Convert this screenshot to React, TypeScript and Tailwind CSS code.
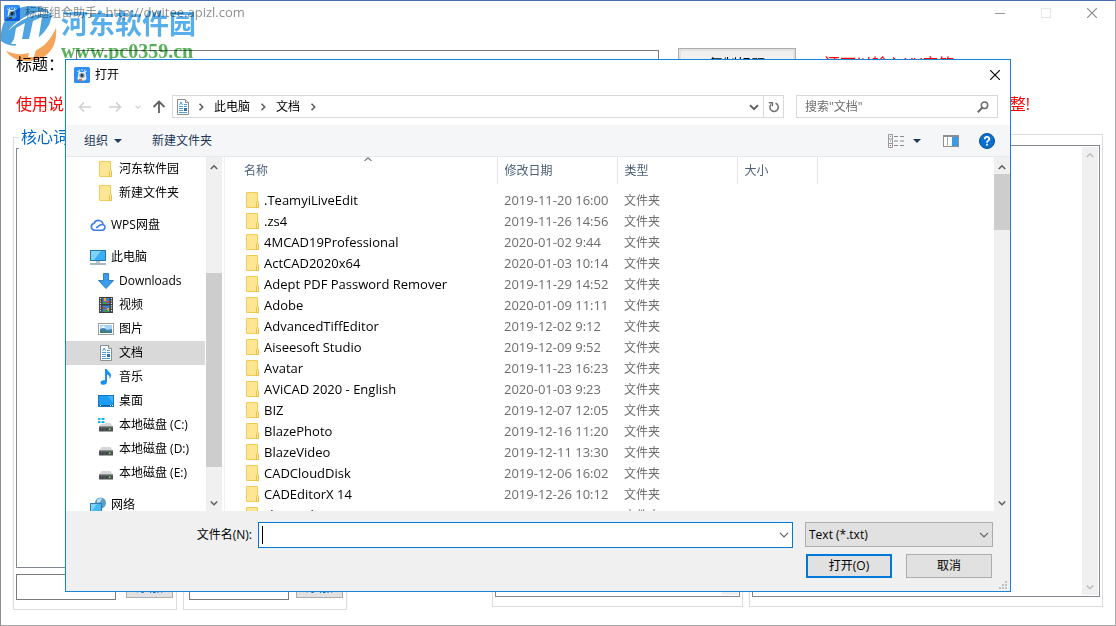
import React from "react";

const FONT = "font-['Open_Sans','Noto_Sans_CJK_SC',sans-serif]";

type IconProps = { className?: string };

function AppIcon({ className = "size-4" }: IconProps) {
  return (
    <svg className={className} viewBox="0 0 16 16" aria-hidden="true">
      <rect width="16" height="16" rx="1.5" fill="#2f8df5" />
      <path d="M3 4l3 1M13 4l-3 1M5 2.5l1 2M11 2.5l-1 2M8 2v2" stroke="#cfe6ff" strokeWidth="1" />
      <path d="M4.5 5h7l1 7-2 1.500h-5l-2-1.500z" fill="#e9f1f8" />
      <circle cx="8" cy="8.500" r="2.700" fill="#8fa3b5" />
      <circle cx="8" cy="8.500" r="1.400" fill="#2b3440" />
      <path d="M5 12h3v2H5z" fill="#e2683c" />
    </svg>
  );
}

function FolderIcon() {
  return (
    <svg className="h-4 w-3.5 shrink-0" viewBox="0 0 14 16" aria-hidden="true">
      <path d="M.5.5h11v9l1 1v5H.5z" fill="#ffe694" stroke="#f0cc57" />
      <path d="M10.500 15.500v-5l1-1.500 1 1.500v5z" fill="#ffefb5" stroke="#e8bf3c" />
    </svg>
  );
}

function DocIcon() {
  return (
    <svg className="h-4 w-4 shrink-0" viewBox="0 0 16 16" aria-hidden="true">
      <path d="M2.500.5h8l3 3v12h-11z" fill="#fff" stroke="#8b8f94" />
      <path d="M10.500.5v3h3" fill="#e8eaec" stroke="#8b8f94" />
      <path d="M4.500 6l1.500-3L7.500 6M4 7.500h4M9 5.500h3M9 7.500h3M4 9.500h4M4 11.500h4M4 13.500h8" stroke="#4a9fdc" fill="none" />
      <path d="M9 9h3v3H9z" fill="#2f6fae" />
    </svg>
  );
}

function CloudIcon() {
  return (
    <svg className="size-4 shrink-0" viewBox="0 0 16 16" aria-hidden="true" fill="none" stroke="#3d7bf0" strokeWidth="1.600">
      <path d="M4 13.200h8.200a3 3 0 0 0 .8-5.800A4.600 4.600 0 0 0 4.200 6.200 3.600 3.600 0 0 0 4 13.200zM6 10.500c1.500 0 2-.8 2.800-1.600.8-.8 2-1.300 3.700-1.100" />
    </svg>
  );
}

function PcIcon() {
  return (
    <svg className="size-4 shrink-0" viewBox="0 0 16 16" aria-hidden="true">
      <rect x=".5" y="1.500" width="15" height="10" fill="#3aaef2" stroke="#2478ac" />
      <path d="M1 2h10L4 11H1z" fill="#7fd2fb" />
      <path d="M6 12h4v2H6z" fill="#b9c6cf" />
      <path d="M0 15h16" stroke="#8ba1ae" strokeWidth="1.500" />
    </svg>
  );
}

function DownloadIcon() {
  return (
    <svg className="size-4 shrink-0" viewBox="0 0 16 16" aria-hidden="true">
      <path d="M5.500.5h5v7h5L8 15.500.5 7.500h5z" fill="#3a9bea" stroke="#2a80c8" />
    </svg>
  );
}

function VideoIcon() {
  return (
    <svg className="size-4 shrink-0" viewBox="0 0 16 16" aria-hidden="true">
      <rect x="1" y="0" width="14" height="16" fill="#3f3f3f" />
      <path d="M2.500 1v14M13.500 1v14" stroke="#e8e8e8" strokeWidth="1.200" strokeDasharray="1.200 1.200" />
      <rect x="4.500" y="1" width="7" height="6" fill="#3f7fd0" />
      <rect x="4.500" y="8.500" width="7" height="6.500" fill="#3f7fd0" />
      <path d="M6 1h2v3H6zM9 11h2v3H9z" fill="#e0b02c" />
      <path d="M8 4h3v2H8zM5 10h2v2H5z" fill="#cf4630" />
      <path d="M5 5h3v2H5zM6 13h4v2H6z" fill="#3f9a45" />
    </svg>
  );
}

function PictureIcon() {
  return (
    <svg className="size-4 shrink-0" viewBox="0 0 16 16" aria-hidden="true">
      <rect x=".5" y="2.500" width="15" height="11" fill="#fff" stroke="#9aa0a6" />
      <rect x="2" y="4" width="12" height="8" fill="#9fd4f7" />
      <path d="M2 8l4-1 3 2 5-1v4H2z" fill="#3f7fae" />
      <path d="M2 6l3-1 3 1.500L5 7z" fill="#fff" />
      <path d="M2 10l5 0 7 2H2z" fill="#3d7f6b" />
    </svg>
  );
}

function MusicIcon() {
  return (
    <svg className="size-4 shrink-0" viewBox="0 0 16 16" aria-hidden="true">
      <path d="M7 0h2c.3 2.500 4 3 4 6.500 0 1.500-.7 2.500-1.500 3.500.6-3-.9-4-2.500-4.500V13c0 1.500-1.500 2.800-3.500 2.800S2.500 15 2.500 13.500 4 11 7 11z" fill="#1b93ee" />
    </svg>
  );
}

function DesktopIcon() {
  return (
    <svg className="size-4 shrink-0" viewBox="0 0 16 16" aria-hidden="true">
      <rect x=".5" y="2.500" width="15" height="11" fill="#1e9bf5" stroke="#1477c2" />
      <path d="M10 3h5v7z" fill="#49b2fa" />
      <path d="M1 12.500h14" stroke="#0f5f9f" />
      <path d="M2 12.500h1M12 12.500h3" stroke="#fff" strokeDasharray="1 1" />
    </svg>
  );
}

function DriveIcon({ system }: { system?: boolean }) {
  return (
    <svg className="size-4 shrink-0" viewBox="0 0 16 16" aria-hidden="true">
      <path d="M3.500 6h9l2.500 4H1z" fill="#d4d6d8" />
      <rect x="1" y="9.500" width="14" height="5" rx=".6" fill="#4b4e50" />
      <path d="M1 9.800h14" stroke="#8f9294" />
      <rect x="11" y="11.500" width="1.500" height="1.500" fill="#7dea5e" />
      {system && (
        <>
          <path d="M0 0h7v7H0z" fill="#fff" />
          <path d="M0 1h2.500v2H0zM3.500 1h3v2h-3zM0 4h2.500v2H0zM3.500 4h3v2h-3z" fill="#17b3ec" />
        </>
      )}
    </svg>
  );
}

function NetworkIcon() {
  return (
    <svg className="size-4 shrink-0" viewBox="0 0 16 16" aria-hidden="true">
      <circle cx="10.500" cy="6" r="5.500" fill="#5b9dc4" />
      <path d="M7 3c2-2 4-2 5-1l-2 3-3 1z" fill="#c3e0ee" />
      <rect x=".5" y="6.500" width="11" height="8" fill="#49b6f7" stroke="#2a7cb5" />
      <path d="M1 7h6l-5 7H1z" fill="#82d0fb" />
    </svg>
  );
}

function Chevron({ dir, color = "#606060", className = "size-2" }: { dir: "up" | "down" | "right"; color?: string; className?: string }) {
  const paths = { up: "M.8 6L4 2.800 7.200 6", down: "M.8 2.500L4 5.700 7.200 2.500", right: "M2.500.8L5.700 4 2.500 7.200" };
  return (
    <svg className={className} viewBox="0 0 8 8" fill="none" stroke={color} strokeWidth="1.600" aria-hidden="true">
      <path d={paths[dir]} />
    </svg>
  );
}

function Triangle() {
  return (
    <svg className="h-1 w-2" viewBox="0 0 8 4" aria-hidden="true">
      <path d="M0 0h8L4 4z" fill="#1e395b" />
    </svg>
  );
}

function CloseIcon({ color, className = "size-2.5" }: { color: string; className?: string }) {
  return (
    <svg className={className} viewBox="0 0 10 10" stroke={color} strokeWidth="1.100" aria-hidden="true">
      <path d="M0 0l10 10M10 0L0 10" />
    </svg>
  );
}

type NavItem = { label: string; icon: React.ReactNode; nested?: boolean; selected?: boolean };

const navGroups: NavItem[][] = [
  [
    { label: "河东软件园", icon: <FolderIcon />, nested: true },
    { label: "新建文件夹", icon: <FolderIcon />, nested: true },
  ],
  [{ label: "WPS网盘", icon: <CloudIcon /> }],
  [
    { label: "此电脑", icon: <PcIcon /> },
    { label: "Downloads", icon: <DownloadIcon />, nested: true },
    { label: "视频", icon: <VideoIcon />, nested: true },
    { label: "图片", icon: <PictureIcon />, nested: true },
    { label: "文档", icon: <DocIcon />, nested: true, selected: true },
    { label: "音乐", icon: <MusicIcon />, nested: true },
    { label: "桌面", icon: <DesktopIcon />, nested: true },
    { label: "本地磁盘 (C:)", icon: <DriveIcon system />, nested: true },
    { label: "本地磁盘 (D:)", icon: <DriveIcon />, nested: true },
    { label: "本地磁盘 (E:)", icon: <DriveIcon />, nested: true },
  ],
  [{ label: "网络", icon: <NetworkIcon /> }],
];

const files: [string, string][] = [
  [".TeamyiLiveEdit", "2019-11-20 16:00"],
  [".zs4", "2019-11-26 14:56"],
  ["4MCAD19Professional", "2020-01-02 9:44"],
  ["ActCAD2020x64", "2020-01-03 10:14"],
  ["Adept PDF Password Remover", "2019-11-29 14:52"],
  ["Adobe", "2020-01-09 11:11"],
  ["AdvancedTiffEditor", "2019-12-02 9:12"],
  ["Aiseesoft Studio", "2019-12-09 9:52"],
  ["Avatar", "2019-11-23 16:23"],
  ["AViCAD 2020 - English", "2020-01-03 9:23"],
  ["BIZ", "2019-12-07 12:05"],
  ["BlazePhoto", "2019-12-16 11:20"],
  ["BlazeVideo", "2019-12-11 13:30"],
  ["CADCloudDisk", "2019-12-06 16:02"],
  ["CADEditorX 14", "2019-12-26 10:12"],
  ["cherryplayer", ""],
];

function WordGroup({ title, name }: { title?: string; name: string }) {
  return (
    <section className={`relative flex w-[164px] flex-col border border-[#dcdcdc] pb-[9px] pt-2.5 ${title ? "pl-0.5 pr-[3px]" : "pl-[5px] pr-[3px]"}`}>
      {title && <h2 className="absolute -top-[13px] left-[5px] bg-white px-0.5 text-base leading-6 text-[#0066cc]">{title}</h2>}
      <div className="flex-1 border border-[#828790]" />
      <div className="mt-1.5 flex items-start justify-between">
        <input aria-label={name} className="h-[26px] w-[100px] border border-[#7a7a7a] bg-white px-1" />
        <button className="h-6 w-[47px] border border-[#adadad] bg-[#e1e1e1] text-sm leading-5 text-[#0078d7]">添加</button>
      </div>
    </section>
  );
}

function MainWindow() {
  return (
    <main className="flex min-h-screen flex-col border border-t-[#4a6ea9] border-b-[#a8a8a8] border-l-[#8c8c8c] border-r-[#a8a8a8] pb-[15px]">
      <header className="flex h-6 items-center gap-[5px] pl-[3px] pr-[18px] text-[#8f8f8f]">
        <AppIcon />
        <h1 className="flex-1 text-[12px]">
          标题组合助手<span className="text-[13px]">--http://dwitee.apizl.com</span>
        </h1>
        <div className="flex items-center gap-9">
          <button aria-label="最小化" className="h-px w-2.5 bg-[#999]" />
          <button aria-label="最大化" className="size-2.5 border border-[#e5e5e5]" />
          <button aria-label="关闭" className="size-2.5">
            <CloseIcon color="#888" />
          </button>
        </div>
      </header>
      <div className="mt-[23px] flex h-8 items-center pl-[15px] text-base">
        <label htmlFor="title" className="w-[60px]">标题：</label>
        <input id="title" className="h-7 w-[583px] border border-[#7a7a7a]" />
        <button className="ml-[19px] h-8 w-[118px] border border-[#adadad] bg-[#f0f0f0] text-sm leading-6 shadow-[inset_0_0_0_2px_#e1e1e1]">复制标题</button>
        <p className="ml-7 text-[#f00]">还可以输入XX字符</p>
      </div>
      <div className="mt-3 flex h-6 items-center justify-between pl-[15px] pr-[85px] text-base text-[#f00]">
        <p>使用说</p>
        <p>整!</p>
      </div>
      <div className="flex min-h-[476px] flex-1 pl-3 pr-3">
        <div className="mt-[21px] flex flex-1 gap-1.5">
          <WordGroup title="核心词" name="核心词" />
          <WordGroup name="关键词" />
        </div>
        <div className="mb-[3px] mt-[18px] flex gap-1.5">
          <section className="flex w-[251px] border border-[#dcdcdc] px-0.5 pb-[9px] pt-2.5">
            <div className="flex flex-1 justify-end border border-[#828790] pb-px pr-px">
              <div className="w-4 bg-[#f0f0f0]" />
            </div>
          </section>
          <section className="flex w-[354px] border border-[#dcdcdc] px-0.5 pb-[9px] pt-2.5">
            <div className="flex flex-1 justify-end border border-[#828790] p-px">
              <div className="flex w-4 flex-col items-center justify-between bg-[#f0f0f0] py-1">
                <Chevron dir="up" color="#bfbfbf" />
                <Chevron dir="down" color="#bfbfbf" />
              </div>
            </div>
          </section>
        </div>
      </div>
    </main>
  );
}

function AddressBar() {
  return (
    <div className="mt-1.5 flex h-[23px] items-center pl-3 pr-3 text-[12px]">
      <button aria-label="后退" className="w-[30px]">
        <svg className="h-3 w-3.5" viewBox="0 0 14 12" fill="none" stroke="#d0d0d0" strokeWidth="1.600" aria-hidden="true">
          <path d="M13 6H2M6 1.500L1.500 6 6 10.500" />
        </svg>
      </button>
      <button aria-label="前进" className="w-[27px]">
        <svg className="h-3 w-3.5" viewBox="0 0 14 12" fill="none" stroke="#d0d0d0" strokeWidth="1.600" aria-hidden="true">
          <path d="M1 6h11M8 1.500L12.500 6 8 10.500" />
        </svg>
      </button>
      <button aria-label="最近位置" className="w-[17px]">
        <Chevron dir="down" color="#d0d0d0" className="size-1.5" />
      </button>
      <button aria-label="上移" className="w-5">
        <svg className="size-3.5" viewBox="0 0 14 14" fill="none" stroke="#606060" strokeWidth="1.800" aria-hidden="true">
          <path d="M7 13V2M1.500 7L7 1.500 12.500 7" />
        </svg>
      </button>
      <div className="flex h-full flex-1 items-center border border-[#d9d9d9] pl-0.5">
        <DocIcon />
        <nav aria-label="路径" className="flex flex-1 items-center gap-[9px] pl-1.5">
          <Chevron dir="right" className="size-2" />
          <a href="#pc">此电脑</a>
          <Chevron dir="right" className="size-2" />
          <a href="#docs">文档</a>
          <Chevron dir="right" className="size-2" />
        </nav>
        <button aria-label="以前的位置" className="flex w-[18px] justify-center">
          <Chevron dir="down" className="size-2.5" />
        </button>
        <button aria-label="刷新" className="flex h-full w-5 items-center justify-center border-l border-[#d9d9d9]">
          <svg className="size-3" viewBox="0 0 12 12" fill="none" stroke="#707070" strokeWidth="1.500" aria-hidden="true">
            <path d="M7.500 2.300A4.200 4.200 0 1 1 3 3.400" />
            <path d="M.8 1.700H4.400V5.200" />
          </svg>
        </button>
      </div>
      <div className="ml-3 flex h-full w-[202px] items-center border border-[#d9d9d9] pl-2 pr-2">
        <input aria-label="搜索" placeholder={'搜索"文档"'} className="min-w-0 flex-1 outline-none placeholder:text-[#6d6d6d]" />
        <svg className="size-3" viewBox="0 0 12 12" fill="none" stroke="#6d6d6d" aria-hidden="true">
          <circle cx="7.500" cy="4.200" r="3.200" strokeWidth="1.500" />
          <path d="M5.200 6.800L.8 11.200" strokeWidth="2" />
        </svg>
      </div>
    </div>
  );
}

function Toolbar() {
  return (
    <div className="mt-[7px] flex h-8 items-center border-b border-[#e8e8e8] bg-[#f5f6f7] pl-[18px] pr-[15px] text-[12px] text-[#1e395b]">
      <button className="flex items-center gap-1.5">
        组织
        <Triangle />
      </button>
      <button className="ml-[30px]">新建文件夹</button>
      <div className="flex-1" />
      <button aria-label="更改视图">
        <svg className="h-3.5 w-4" viewBox="0 0 16 14" fill="none" aria-hidden="true">
          <path d="M.5.5h4v13h-4zM.5 5h4M.5 9.500h4" stroke="#9b9b9b" />
          <path d="M6 2.500h4M12 2.500h4M6 7h4M12 7h4M6 11.500h4M12 11.500h4" stroke="#8a8a8a" />
          <path d="M2 2h1v1H2z" fill="#5a9a5a" />
          <path d="M2 6.500h1v1H2z" fill="#3a8fd0" />
          <path d="M2 11h1v1H2z" fill="#c33" />
        </svg>
      </button>
      <button aria-label="更多选项" className="ml-[9px]">
        <Triangle />
      </button>
      <button aria-label="预览窗格" className="ml-[22px]">
        <svg className="h-3 w-4" viewBox="0 0 16 12" aria-hidden="true">
          <rect x=".5" y=".5" width="15" height="11" fill="#fff" stroke="#8a8f94" />
          <path d="M0 0h16v2H0z" fill="#8a8f94" />
          <path d="M4.500 2v10" stroke="#a8adb2" />
          <path d="M9 2h6v9H9z" fill="#3c9be0" />
        </svg>
      </button>
      <button aria-label="帮助" className="ml-5">
        <svg className="size-4" viewBox="0 0 16 16" aria-hidden="true">
          <circle cx="8" cy="8" r="7.500" fill="#0b6fd0" stroke="#0a4f93" />
          <path d="M5.800 6.200C5.800 3.200 10.400 3.300 10.300 6 10.200 7.700 8 7.700 8 9.700" fill="none" stroke="#fff" strokeWidth="1.800" />
          <path d="M7.100 10.800h1.800v1.700H7.100z" fill="#fff" />
        </svg>
      </button>
    </div>
  );
}

function Sidebar() {
  return (
    <nav aria-label="导航窗格" className="flex w-[159px] shrink-0 overflow-hidden border-r border-[#f0f0f0]">
      <div className="flex w-[139px] flex-col gap-2">
        {navGroups.map((group, i) => (
          <ul key={i}>
            {group.map((item) => (
              <li key={item.label}>
                <a
                  href="#folder"
                  className={`flex h-6 items-center gap-[5px] whitespace-nowrap text-[12px] ${item.nested ? "pl-8" : "pl-6"} ${item.selected ? "bg-[#d9d9d9]" : ""}`}
                >
                  <span className="flex w-4 justify-center">{item.icon}</span>
                  {item.label}
                </a>
              </li>
            ))}
          </ul>
        ))}
      </div>
      <div className="ml-px flex w-4 flex-col items-center bg-[#f0f0f0] pb-1 pt-1.5">
        <Chevron dir="up" />
        <div className="mt-[102px] h-[194px] w-full bg-[#cdcdcd]" />
        <div className="flex-1" />
        <Chevron dir="down" />
      </div>
    </nav>
  );
}

function FileList() {
  return (
    <div className="flex min-w-0 flex-1 overflow-hidden">
      <div className="relative min-w-0 flex-1">
        <div className="absolute left-[139px] top-0">
          <svg className="h-1 w-2" viewBox="0 0 8 4" fill="none" stroke="#777" strokeWidth="1.200" aria-hidden="true">
            <path d="M.5 4L4 .8 7.500 4" />
          </svg>
        </div>
        <table className="w-[592px] table-fixed text-left text-[12px]">
          <colgroup>
            <col className="w-[272px]" />
            <col className="w-[120px]" />
            <col className="w-[120px]" />
            <col className="w-20" />
          </colgroup>
          <thead>
            <tr className="h-[27px] text-[#4c607a]">
              <th className="border-r border-[#e5e5e5] p-0 pl-[19px] font-normal">名称</th>
              <th className="border-r border-[#e5e5e5] p-0 pl-[7px] font-normal">修改日期</th>
              <th className="border-r border-[#e5e5e5] p-0 pl-[7px] font-normal">类型</th>
              <th className="border-r border-[#e5e5e5] p-0 pl-[7px] font-normal">大小</th>
            </tr>
          </thead>
          <tbody className="before:block before:h-[5px]">
            {files.map(([name, date]) => (
              <tr key={name} className="h-[21px]">
                <td className="p-0 pl-[21px]">
                  <div className="flex h-[21px] items-center gap-1 whitespace-nowrap text-[13px] leading-5">
                    <FolderIcon />
                    {name}
                  </div>
                </td>
                <td className="whitespace-nowrap p-0 pl-[7px] text-[13px] leading-5 text-[#6d6d6d]">{date}</td>
                <td className="p-0 pl-[7px] pt-0.5 leading-[18px] text-[#6d6d6d]">文件夹</td>
                <td />
              </tr>
            ))}
          </tbody>
        </table>
      </div>
      <div className="flex w-4 flex-col items-center bg-[#f0f0f0] pb-1 pt-1.5">
        <Chevron dir="up" />
        <div className="mt-[3px] h-14 w-full bg-[#cdcdcd]" />
        <div className="flex-1" />
        <Chevron dir="down" />
      </div>
    </div>
  );
}

function Footer() {
  return (
    <div className="relative flex h-20 flex-col bg-[#f0f0f0] pl-[129px] pr-[17px] pt-[11px] text-[12px]">
      <div className="flex items-start">
        <label htmlFor="filename" className="w-[63px] whitespace-nowrap pr-1.5 text-right leading-[26px]">文件名(N):</label>
        <div className="flex h-[26px] flex-1 items-center border border-[#0078d7] bg-white pl-[3px] pr-[3px]">
          <span className="h-[18px] w-px bg-black" />
          <input id="filename" className="h-full min-w-0 flex-1 bg-transparent px-1 outline-none" />
          <button aria-label="历史记录">
            <svg className="h-1.5 w-2.5" viewBox="0 0 10 6" fill="none" stroke="#606060" strokeWidth="1.200" aria-hidden="true">
              <path d="M1 .8l4 4 4-4" />
            </svg>
          </button>
        </div>
        <div className="relative ml-3 h-[25px] w-[188px]">
          <select aria-label="文件类型" className="h-full w-full appearance-none border border-[#adadad] bg-[#e1e1e1] pl-[3px] outline-none">
            <option>Text (*.txt)</option>
          </select>
          <svg className="pointer-events-none absolute right-1 top-2.5 h-1.5 w-2.5" viewBox="0 0 10 6" fill="none" stroke="#606060" strokeWidth="1.200" aria-hidden="true">
            <path d="M1 .8l4 4 4-4" />
          </svg>
        </div>
      </div>
      <div className="mt-1.5 flex justify-end gap-3.5 pr-px">
        <button className="h-6 w-[86px] border-2 border-[#0078d7] bg-[#e1e1e1]">打开(O)</button>
        <button className="h-6 w-[86px] border border-[#adadad] bg-[#e1e1e1]">取消</button>
      </div>
      <svg className="absolute bottom-0.5 right-[3px] size-2" viewBox="0 0 8 8" fill="#bfbfbf" aria-hidden="true">
        <path d="M6 0h2v2H6zM3 3h2v2H3zM6 3h2v2H6zM0 6h2v2H0zM3 6h2v2H3zM6 6h2v2H6z" />
      </svg>
    </div>
  );
}

function OpenDialog() {
  return (
    <div role="dialog" aria-label="打开" className="absolute left-[65px] right-[105px] top-[59px] flex flex-col border border-[#1883d7] bg-white">
      <div className="flex h-[29px] items-center gap-[5px] pl-2 pr-2.5 text-[12px]">
        <AppIcon />
        <h2 className="flex-1">打开</h2>
        <button aria-label="关闭对话框">
          <CloseIcon color="#000" />
        </button>
      </div>
      <AddressBar />
      <Toolbar />
      <div className="flex h-[354px]">
        <Sidebar />
        <FileList />
      </div>
      <Footer />
    </div>
  );
}

function Watermark() {
  return (
    <div className="pointer-events-none absolute left-0 top-1.5 flex items-start gap-1 mix-blend-multiply">
      <svg className="h-[56px] w-[57px]" viewBox="0 0 57 56" aria-hidden="true">
        <path d="M1 33C0 14 12 0 31 0c10 0 17 3 21 10l-3 9c-6 10-14 17-26 20-9 2-17 0-22-4z" fill="#4fa3e0" />
        <path d="M56 22c2 19-9 33-28 33-10 0-17-3-22-10 11 5 24 4 34-3 8-5 12-12 16-20z" fill="#f5a458" />
        <path d="M8 25c6-8 17-16 30-19 5-1 9 0 12 2-15-1-29 4-42 17z" fill="#fff" />
        <path d="M16 22l9-5-3 16h7l4-18 9-4-4 25-4 15h-6l3-12H22l-2 8h-6l2-9-5 0 3-5z" fill="#fff" />
      </svg>
      <div>
        <p className="text-[27px] font-bold leading-9 text-[#58aeea]">河东软件园</p>
        <p className="font-['Liberation_Serif',serif] text-[20px] font-bold leading-[18px] text-[#58b058]">www.pc0359.cn</p>
      </div>
    </div>
  );
}

export default function App() {
  return (
    <div className={`relative min-h-screen bg-white text-black ${FONT}`}>
      <MainWindow />
      <Watermark />
      <OpenDialog />
    </div>
  );
}
